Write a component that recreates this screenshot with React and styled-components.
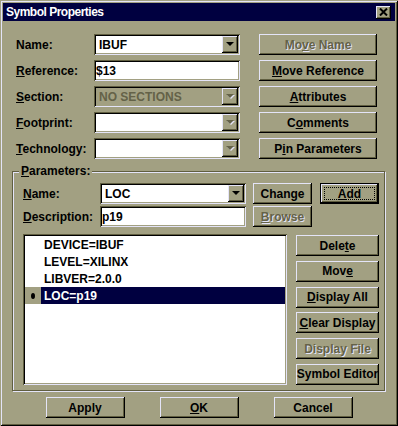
import React from 'react';
import styled, { createGlobalStyle } from 'styled-components';

const FACE = '#a2a082';
const SHADOW = '#605e40';
const LIGHT = '#e4e4f8';
const NAVY = '#000040';
const DIS = '#646248';

const Global = createGlobalStyle`
  html, body { margin: 0; padding: 0; background: ${FACE}; }
  body {
    font-family: "Liberation Sans", Arial, sans-serif;
    font-size: 12px;
    font-weight: bold;
    color: #000;
  }
  * { box-sizing: border-box; }
`;

const Window = styled.div`
  width: 398px;
  height: 426px;
  padding: 3px;
  background: ${FACE};
  box-shadow: inset 1px 1px 0 ${FACE}, inset -1px -1px 0 #000,
    inset 2px 2px 0 ${LIGHT}, inset -2px -2px 0 ${SHADOW};
  display: flex;
  flex-direction: column;
`;

const TitleBar = styled.div`
  height: 18px;
  background: ${NAVY};
  color: #fff;
  display: flex;
  align-items: center;
  justify-content: space-between;
  padding: 0 4px 0 3px;
  font-size: 12px;
  line-height: 18px;
`;

const TitleText = styled.span`
  letter-spacing: -0.5px;
`;

const CloseBtn = styled.div`
  width: 15px;
  height: 13px;
  background: ${FACE};
  box-shadow: inset -1px -1px 0 #000, inset 1px 1px 0 ${LIGHT},
    inset -2px -2px 0 ${SHADOW};
  display: flex;
  align-items: center;
  justify-content: center;
`;

const Body = styled.div`
  flex: 1;
  display: flex;
  flex-direction: column;
  padding: 13px 10px 0 9px;
`;

const TopGrid = styled.div`
  display: grid;
  grid-template-columns: 78px 146px 137px;
  grid-auto-rows: 21px;
  row-gap: 5px;
  padding-left: 4px;
`;

const Label = styled.div`
  align-self: center;
  white-space: nowrap;
`;

const U = styled.span`
  text-decoration: underline;
  text-underline-offset: 1px;
`;

const sunken = `
  box-shadow: inset 1px 1px 0 ${SHADOW}, inset -1px -1px 0 ${LIGHT},
    inset 2px 2px 0 #000, inset -2px -2px 0 ${FACE};
`;

const Field = styled.div`
  ${sunken}
  height: 21px;
  background: ${(p) => (p.$disabled ? FACE : '#fff')};
  color: ${(p) => (p.$disabled ? DIS : '#000')};
  display: flex;
  align-items: center;
  padding: 2px 2px 2px ${(p) => (p.$combo ? 5 : 2)}px;
  white-space: nowrap;
`;

const FieldText = styled.span`
  flex: 1;
`;

const DropBtn = styled.div`
  width: 16px;
  height: 17px;
  background: ${FACE};
  box-shadow: inset -1px -1px 0 #000, inset 1px 1px 0 ${LIGHT},
    inset -2px -2px 0 ${SHADOW};
  display: flex;
  align-items: center;
  justify-content: center;
  padding-bottom: 1px;
`;

const Arrow = styled.div`
  width: 0;
  height: 0;
  border-left: 4px solid transparent;
  border-right: 4px solid transparent;
  border-top: 4px solid ${(p) => (p.$disabled ? DIS : '#000')};
  filter: ${(p) => (p.$disabled ? `drop-shadow(1px 1px 0 ${LIGHT})` : 'none')};
`;

const Button = styled.div`
  height: 21px;
  width: ${(p) => p.$w}px;
  justify-self: end;
  background: ${FACE};
  box-shadow: ${(p) =>
    p.$default
      ? `inset 0 0 0 1px #000, inset -2px -2px 0 #000, inset 2px 2px 0 ${LIGHT}, inset -3px -3px 0 ${SHADOW}`
      : `inset -1px -1px 0 #000, inset 1px 1px 0 ${LIGHT}, inset -2px -2px 0 ${SHADOW}`};
  color: ${(p) => (p.$disabled ? DIS : '#000')};
  text-shadow: ${(p) => (p.$disabled ? `1px 1px 0 ${LIGHT}` : 'none')};
  display: flex;
  align-items: center;
  justify-content: center;
  white-space: nowrap;
  padding: ${(p) => (p.$default ? '4px' : '0')};
`;

const Focus = styled.div`
  flex: 1;
  align-self: stretch;
  border: 1px dotted #000;
  display: flex;
  align-items: center;
  justify-content: center;
`;

const Group = styled.fieldset`
  margin: 6px 0 0 0;
  padding: 0;
  min-width: 0;
  border: 1px solid ${SHADOW};
  box-shadow: inset 1px 1px 0 ${LIGHT}, 1px 1px 0 ${LIGHT};
`;

const Legend = styled.legend`
  margin-left: 6px;
  padding: 0 2px;
  background: ${FACE};
  line-height: 13px;
`;

const Inner = styled.div`
  padding: 5px 4px 5px 10px;
  display: flex;
  flex-direction: column;
`;

const ParamGrid = styled.div`
  display: grid;
  grid-template-columns: 77px 146px 66px 67px;
  grid-auto-rows: 21px;
  row-gap: 2px;
`;

const ListRow = styled.div`
  display: flex;
  gap: 9px;
  margin-top: 7px;
`;

const List = styled.div`
  ${sunken}
  width: 264px;
  height: 151px;
  background: #fff;
  padding: 2px;
  display: flex;
  flex-direction: column;
`;

const Item = styled.div`
  height: 17px;
  display: flex;
`;

const Mark = styled.div`
  width: 16px;
  background: ${(p) => (p.$sel ? FACE : 'transparent')};
  display: flex;
  align-items: center;
  justify-content: center;
`;

const Bullet = styled.div`
  width: 4px;
  height: 6px;
  border-radius: 50%;
  background: #000;
`;

const ItemText = styled.div`
  flex: 1;
  padding-left: 3px;
  display: flex;
  align-items: center;
  background: ${(p) => (p.$sel ? NAVY : 'transparent')};
  color: ${(p) => (p.$sel ? '#fff' : '#000')};
`;

const SideButtons = styled.div`
  width: 83px;
  display: flex;
  flex-direction: column;
  justify-content: space-between;
  padding-top: 1px;
`;

const BottomBar = styled.div`
  display: flex;
  justify-content: center;
  gap: 35px;
  margin-top: 6px;
  padding-left: 1px;
`;

const params = ['DEVICE=IBUF', 'LEVEL=XILINX', 'LIBVER=2.0.0', 'LOC=p19'];

function Combo({ text, disabled, arrowDisabled }) {
  return (
    <Field $combo $disabled={disabled}>
      <FieldText>{text}</FieldText>
      <DropBtn>
        <Arrow $disabled={arrowDisabled || disabled} />
      </DropBtn>
    </Field>
  );
}

export default function App() {
  return (
    <>
      <Global />
      <Window>
        <TitleBar>
          <TitleText>Symbol Properties</TitleText>
          <CloseBtn>
            <svg width="9" height="8" viewBox="0 0 9 8">
              <path d="M1 0.5 L8 7.5 M8 0.5 L1 7.5" stroke="#000" strokeWidth="2" />
            </svg>
          </CloseBtn>
        </TitleBar>
        <Body>
          <TopGrid>
            <Label>Name:</Label>
            <Combo text="IBUF" />
            <Button $w={118} $disabled>
              <span>Mo<U>v</U>e Name</span>
            </Button>

            <Label><U>R</U>eference:</Label>
            <Field>$13</Field>
            <Button $w={118}>
              <span><U>M</U>ove Reference</span>
            </Button>

            <Label><U>S</U>ection:</Label>
            <Combo text="NO SECTIONS" disabled />
            <Button $w={118}>
              <span><U>A</U>ttributes</span>
            </Button>

            <Label><U>F</U>ootprint:</Label>
            <Combo text="" arrowDisabled />
            <Button $w={118}>
              <span>C<U>o</U>mments</span>
            </Button>

            <Label><U>T</U>echnology:</Label>
            <Combo text="" arrowDisabled />
            <Button $w={118}>
              <span>P<U>i</U>n Parameters</span>
            </Button>
          </TopGrid>

          <Group>
            <Legend><U>P</U>arameters:</Legend>
            <Inner>
              <ParamGrid>
                <Label><U>N</U>ame:</Label>
                <Combo text="LOC" />
                <Button $w={59}>
                  <span>Chan<U>g</U>e</span>
                </Button>
                <Button $w={59} $default>
                  <Focus>
                    <span><U>A</U>dd</span>
                  </Focus>
                </Button>

                <Label><U>D</U>escription:</Label>
                <Field>p19</Field>
                <Button $w={59} $disabled>
                  <span><U>B</U>rowse</span>
                </Button>
                <div />
              </ParamGrid>

              <ListRow>
                <List>
                  {params.map((p, i) => {
                    const sel = i === params.length - 1;
                    return (
                      <Item key={p}>
                        <Mark $sel={sel}>{sel && <Bullet />}</Mark>
                        <ItemText $sel={sel}>{p}</ItemText>
                      </Item>
                    );
                  })}
                </List>
                <SideButtons>
                  <Button $w={83}><span>Dele<U>t</U>e</span></Button>
                  <Button $w={83}><span>Mov<U>e</U></span></Button>
                  <Button $w={83}><span><U>D</U>isplay All</span></Button>
                  <Button $w={83}><span><U>C</U>lear Display</span></Button>
                  <Button $w={83} $disabled><span>Display File</span></Button>
                  <Button $w={83}><span>Symbol Editor</span></Button>
                </SideButtons>
              </ListRow>
            </Inner>
          </Group>

          <BottomBar>
            <Button $w={79}><span>Apply</span></Button>
            <Button $w={79}><span><U>O</U>K</span></Button>
            <Button $w={79}><span>Cancel</span></Button>
          </BottomBar>
        </Body>
      </Window>
    </>
  );
}
